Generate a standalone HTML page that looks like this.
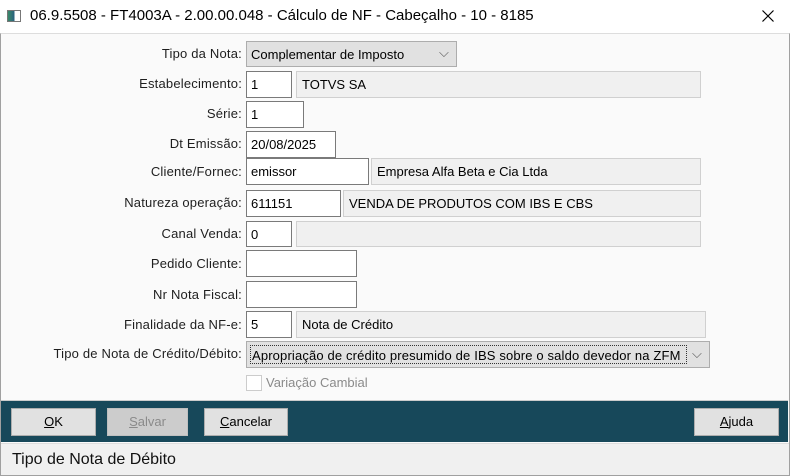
<!DOCTYPE html>
<html><head><meta charset="utf-8"><style>
*{margin:0;padding:0;box-sizing:border-box}
body{width:790px;height:476px;position:relative;background:#fff;font-family:"Liberation Sans",sans-serif;font-size:13px;color:#000;overflow:hidden}
.a{position:absolute}
.lbl{position:absolute;right:548px;text-align:right;white-space:nowrap;color:#1e1e1e;letter-spacing:0.2px}
.in{position:absolute;background:#fff;border:1px solid #7a7a7a;padding:4px 0 0 4px;white-space:nowrap}
.ds{position:absolute;background:#f0f0f0;border:1px solid #d0d0d0;padding:5px 0 0 5px;white-space:nowrap}
.dd{position:absolute;background:#e1e1e1;border:1px solid #adadad;padding:5px 0 0 4px;white-space:nowrap}
.btn{position:absolute;top:408px;height:28px;background:#e1e1e1;border:1px solid #adadad;text-align:center;line-height:26px;font-size:13px}
</style></head><body>
<div class="a" style="left:0;top:0;width:790px;height:33px;background:#fff"></div>
<div class="a" style="left:7px;top:10px;width:14px;height:12px;border:1px solid #777;background:linear-gradient(90deg,#3a8a6a 0,#2a6080 55%,#fff 55%)"></div>
<div class="a" style="left:30px;top:7px;font-size:15px;color:#000">06.9.5508 - FT4003A - 2.00.00.048 - Cálculo de NF - Cabeçalho - 10 - 8185</div>
<svg class="a" style="left:762px;top:10px" width="12" height="12"><path d="M0.5 0.5L11.5 11.5M11.5 0.5L0.5 11.5" stroke="#000" stroke-width="1.2"/></svg>
<div class="a" style="left:0;top:33px;width:790px;height:443px;background:#fafafa;border:1px solid #a0a0a0;border-top:1px solid #ddd"></div>

<div class="lbl" style="top:46px">Tipo da Nota:</div>
<div class="dd" style="left:246px;top:41px;width:211px;height:26px">Complementar de Imposto<span class="a" style="left:192px;top:3px;color:#555">⌵</span></div>

<div class="lbl" style="top:76px">Estabelecimento:</div>
<div class="in" style="left:246px;top:71px;width:46px;height:27px;padding-top:5px">1</div>
<div class="ds" style="left:296px;top:71px;width:405px;height:27px">TOTVS SA</div>

<div class="lbl" style="top:106px">Série:</div>
<div class="in" style="left:246px;top:101px;width:58px;height:27px;padding-top:5px">1</div>

<div class="lbl" style="top:136px">Dt Emissão:</div>
<div class="in" style="left:246px;top:131px;width:90px;height:27px;padding-top:5px">20/08/2025</div>

<div class="lbl" style="top:164px">Cliente/Fornec:</div>
<div class="in" style="left:246px;top:158px;width:123px;height:27px;padding-top:5px">emissor</div>
<div class="ds" style="left:371px;top:158px;width:330px;height:27px;padding-top:5px">Empresa Alfa Beta e Cia Ltda</div>

<div class="lbl" style="top:195px">Natureza operação:</div>
<div class="in" style="left:246px;top:190px;width:95px;height:27px;padding-top:5px">611151</div>
<div class="ds" style="left:343px;top:190px;width:358px;height:27px">VENDA DE PRODUTOS COM IBS E CBS</div>

<div class="lbl" style="top:226px">Canal Venda:</div>
<div class="in" style="left:246px;top:221px;width:46px;height:26px;padding-top:5px">0</div>
<div class="ds" style="left:296px;top:221px;width:405px;height:26px"></div>

<div class="lbl" style="top:256px">Pedido Cliente:</div>
<div class="in" style="left:246px;top:250px;width:111px;height:27px"></div>

<div class="lbl" style="top:287px">Nr Nota Fiscal:</div>
<div class="in" style="left:246px;top:281px;width:111px;height:27px"></div>

<div class="lbl" style="top:317px">Finalidade da NF-e:</div>
<div class="in" style="left:246px;top:311px;width:46px;height:27px;padding-top:5px">5</div>
<div class="ds" style="left:296px;top:311px;width:410px;height:27px">Nota de Crédito</div>

<div class="lbl" style="top:346px">Tipo de Nota de Crédito/Débito:</div>
<div class="dd" style="left:246px;top:341px;width:464px;height:27px;padding:3px 0 0 3px"><span style="display:inline-block;border:1px dotted #333;padding:2px 1px;height:19px;width:437px;overflow:hidden;letter-spacing:0.15px">Apropriação de crédito presumido de IBS sobre o saldo devedor na ZFM</span><span class="a" style="left:445px;top:4px;color:#555">⌵</span></div>

<div class="a" style="left:246px;top:375px;width:16px;height:16px;border:1px solid #ccc;background:#fff"></div>
<div class="a" style="left:266px;top:375px;color:#8a8a8a">Variação Cambial</div>

<div class="a" style="left:1px;top:400px;width:787px;height:42px;background:#17485a;border-top:1px solid #ccc"></div>
<div class="btn" style="left:11px;width:85px"><u>O</u>K</div>
<div class="btn" style="left:107px;width:81px;background:#cccccc;border-color:#bfbfbf;color:#8a8a8a"><u>S</u>alvar</div>
<div class="btn" style="left:204px;width:84px"><u>C</u>ancelar</div>
<div class="btn" style="left:694px;width:85px"><u>A</u>juda</div>

<div class="a" style="left:1px;top:443px;width:788px;height:32px;background:#f0f0f0;border-top:1px solid #ddd"></div>
<div class="a" style="left:12px;top:451px;font-size:16px;color:#111">Tipo de Nota de Débito</div>
</body></html>
